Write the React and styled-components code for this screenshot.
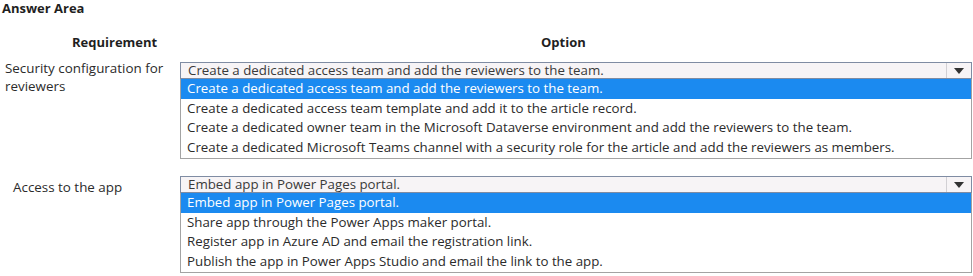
import React from "react";
import styled, { createGlobalStyle } from "styled-components";

const Global = createGlobalStyle`
  html, body { margin: 0; padding: 0; background: #ffffff; }
  body { font-family: "Open Sans", "Noto Sans", sans-serif; color: #2b2b2b; }
`;

const Page = styled.div`
  width: 973px;
  height: 276px;
  box-sizing: border-box;
  padding: 0 1px 0 2px;
  overflow: hidden;
`;

const Title = styled.div`
  font-size: 13px;
  font-weight: 700;
  line-height: 16px;
  color: #1f1f1f;
`;

const HeaderRow = styled.div`
  display: grid;
  grid-template-columns: 178px 1fr;
  margin-top: 17px;
  font-size: 13px;
  font-weight: 700;
  line-height: 18px;
  color: #1f1f1f;
`;

const HeaderCell = styled.div`
  padding-left: ${(p) => p.$indent}px;
`;

const QuestionRow = styled.div`
  display: grid;
  grid-template-columns: 178px 1fr;
  align-items: start;
  margin-top: ${(p) => p.$gap}px;
`;

const Label = styled.div`
  font-size: 13.4px;
  line-height: 18px;
  padding-left: ${(p) => p.$indent}px;
  margin-top: ${(p) => p.$shift}px;
  color: #2b2b2b;
`;

const Select = styled.div`
  display: flex;
  flex-direction: column;
`;

const Box = styled.div`
  display: flex;
  height: 17px;
  box-sizing: border-box;
  border: 1px solid #7f8ca3;
  background: #f7f4f6;
`;

const BoxText = styled.div`
  flex: 1;
  padding: 0 0 0 7px;
  font-size: 13.3px;
  line-height: 15px;
  white-space: nowrap;
  color: #3a3a3a;
`;

const ArrowButton = styled.div`
  width: 24px;
  border-left: 1px solid #d2d0d4;
  display: flex;
  align-items: center;
  justify-content: center;
`;

const Arrow = styled.span`
  width: 0;
  height: 0;
  border-left: 5px solid transparent;
  border-right: 5px solid transparent;
  border-top: 6px solid #333;
  margin-top: 1px;
`;

const List = styled.div`
  border: 1px solid #a3a3a3;
  border-top: none;
  background: #ffffff;
  padding-bottom: 1px;
`;

const Item = styled.div`
  font-size: 13.3px;
  line-height: 19.5px;
  height: 19.5px;
  padding-left: 6px;
  white-space: nowrap;
  background: ${(p) => (p.$selected ? "#1b8af0" : "transparent")};
  color: ${(p) => (p.$selected ? "#ffffff" : "#2b2b2b")};
`;

const Dropdown = ({ value, options }) => (
  <Select>
    <Box>
      <BoxText>{value}</BoxText>
      <ArrowButton>
        <Arrow />
      </ArrowButton>
    </Box>
    <List>
      {options.map((o, i) => (
        <Item key={i} $selected={i === 0}>
          {o}
        </Item>
      ))}
    </List>
  </Select>
);

export default function App() {
  return (
    <Page>
      <Global />
      <Title>Answer Area</Title>
      <HeaderRow>
        <HeaderCell $indent={70}>Requirement</HeaderCell>
        <HeaderCell $indent={361}>Option</HeaderCell>
      </HeaderRow>
      <QuestionRow $gap={11}>
        <Label $indent={3} $shift={-3}>
          Security configuration for
          <br />
          reviewers
        </Label>
        <Dropdown
          value="Create a dedicated access team and add the reviewers to the team."
          options={[
            "Create a dedicated access team and add the reviewers to the team.",
            "Create a dedicated access team template and add it to the article record.",
            "Create a dedicated owner team in the Microsoft Dataverse environment and add the reviewers to the team.",
            "Create a dedicated Microsoft Teams channel with a security role for the article and add the reviewers as members.",
          ]}
        />
      </QuestionRow>
      <QuestionRow $gap={17}>
        <Label $indent={11} $shift={2}>
          Access to the app
        </Label>
        <Dropdown
          value="Embed app in Power Pages portal."
          options={[
            "Embed app in Power Pages portal.",
            "Share app through the Power Apps maker portal.",
            "Register app in Azure AD and email the registration link.",
            "Publish the app in Power Apps Studio and email the link to the app.",
          ]}
        />
      </QuestionRow>
    </Page>
  );
}
